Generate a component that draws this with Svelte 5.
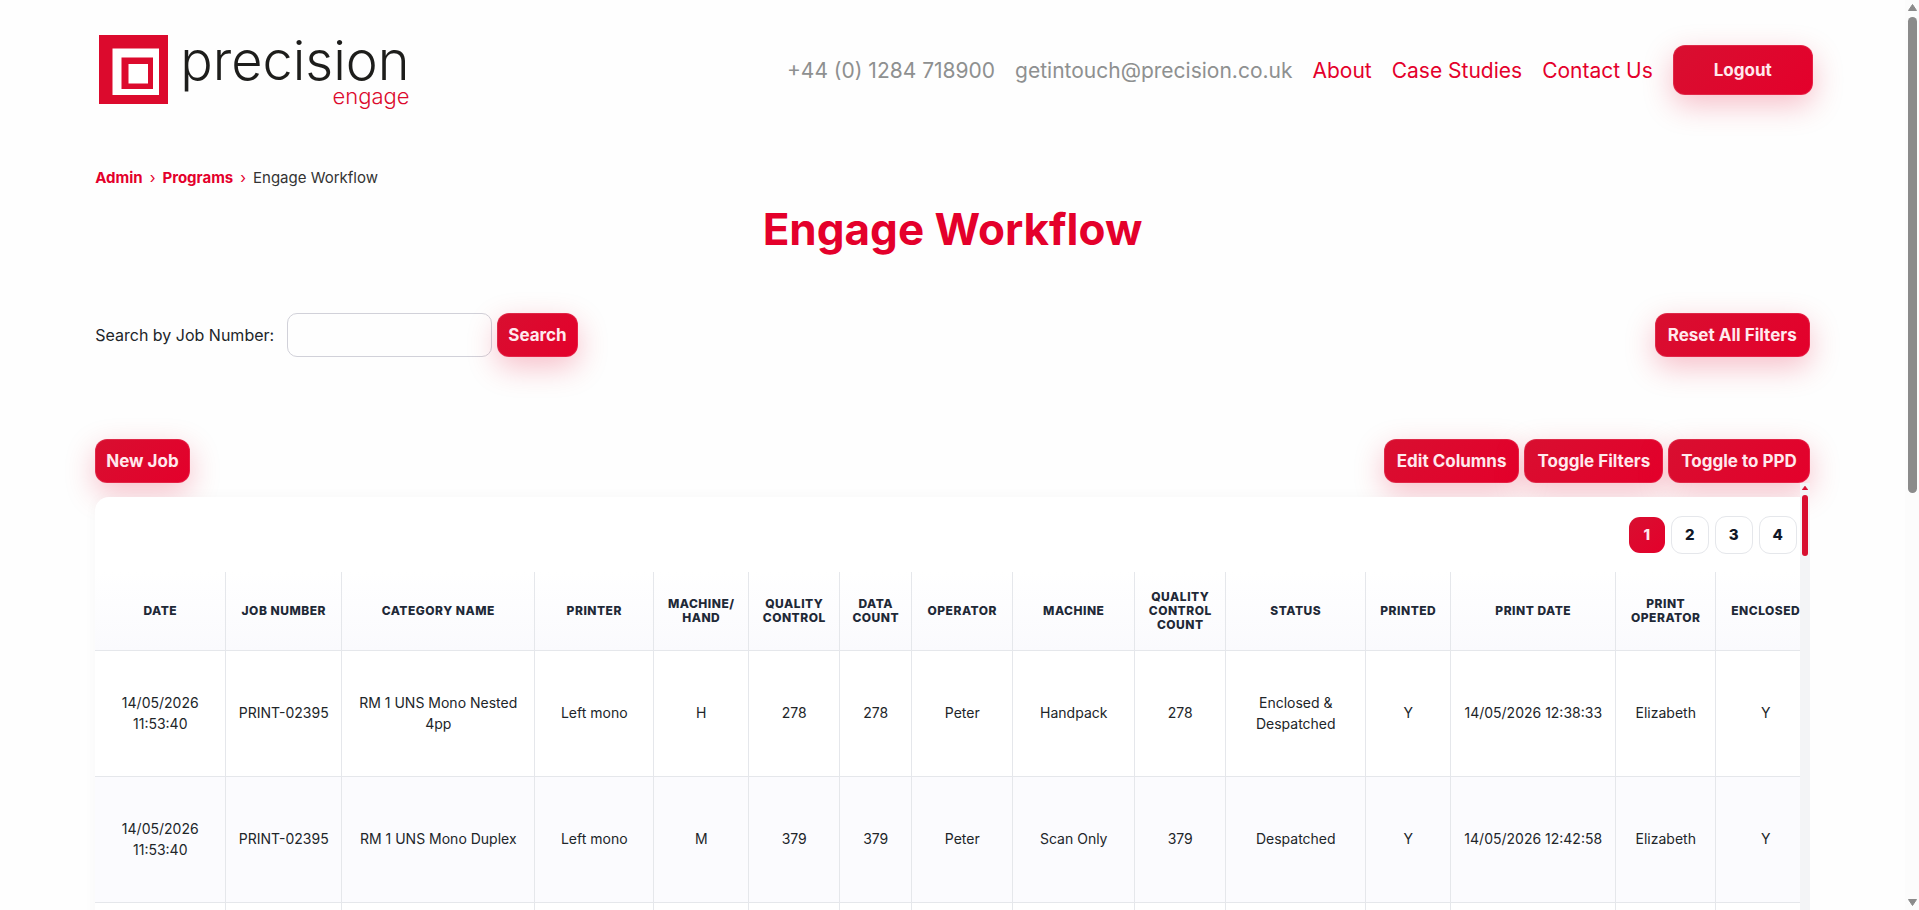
<script>
  const columns = [
    { label: 'Date', width: 131 },
    { label: 'Job Number', width: 116 },
    { label: 'Category Name', width: 193 },
    { label: 'Printer', width: 119 },
    { label: 'Machine/ Hand', width: 95 },
    { label: 'Quality Control', width: 91 },
    { label: 'Data Count', width: 72 },
    { label: 'Operator', width: 101 },
    { label: 'Machine', width: 122 },
    { label: 'Quality Control Count', width: 91 },
    { label: 'Status', width: 140 },
    { label: 'Printed', width: 85 },
    { label: 'Print Date', width: 165 },
    { label: 'Print Operator', width: 100 },
    { label: 'Enclosed', width: 100 }
  ];

  const rows = [
    ['14/05/2026 11:53:40', 'PRINT-02395', 'RM 1 UNS Mono Nested 4pp', 'Left mono', 'H', '278', '278', 'Peter', 'Handpack', '278', 'Enclosed & Despatched', 'Y', '14/05/2026 12:38:33', 'Elizabeth', 'Y'],
    ['14/05/2026 11:53:40', 'PRINT-02395', 'RM 1 UNS Mono Duplex', 'Left mono', 'M', '379', '379', 'Peter', 'Scan Only', '379', 'Despatched', 'Y', '14/05/2026 12:42:58', 'Elizabeth', 'Y'],
    columns.map(() => '')
  ];

  const pages = [1, 2, 3, 4];
  let current = $state(1);
  let jobNumber = $state('');
</script>

<div class="page">
  <div class="view">
    <header>
      <a class="logo" href="#home" aria-label="precision engage">
        <svg width="69" height="69" viewBox="0 0 69 69" aria-hidden="true">
          <rect width="69" height="69" fill="#dc0a2d" />
          <rect x="13.500" y="13.500" width="46.500" height="46.500" fill="#fff" />
          <rect x="22.500" y="22.500" width="31.500" height="31.500" fill="#dc0a2d" />
          <rect x="29.500" y="29" width="19.500" height="19.500" fill="#fff" />
        </svg>
        <span class="wordmark">
          <span class="brand">precision</span>
          <span class="sub">engage</span>
        </span>
      </a>
      <nav>
        <a class="muted" href="#phone">+44 (0) 1284 718900</a>
        <a class="muted" href="#email">getintouch@precision.co.uk</a>
        <a href="#about">About</a>
        <a href="#case-studies">Case Studies</a>
        <a href="#contact">Contact Us</a>
        <button class="btn logout">Logout</button>
      </nav>
    </header>

    <main>
      <div class="crumbs">
        <a href="#admin">Admin</a><i>›</i><a href="#programs">Programs</a><i>›</i><span>Engage Workflow</span>
      </div>
      <h1>Engage Workflow</h1>

      <div class="bar search">
        <label for="job">Search by Job Number:</label>
        <input id="job" type="text" bind:value={jobNumber} />
        <button class="btn snug">Search</button>
        <button class="btn end">Reset All Filters</button>
      </div>

      <div class="bar actions">
        <button class="btn snug">New Job</button>
        <button class="btn end">Edit Columns</button>
        <button class="btn">Toggle Filters</button>
        <button class="btn">Toggle to PPD</button>
      </div>

      <div class="panel">
        <div class="card">
          <div class="pager">
            {#each pages as n}
              <button class:active={n === current} onclick={() => (current = n)}>{n}</button>
            {/each}
          </div>
          <div class="clip">
            <table>
              <colgroup>
                {#each columns as c}<col style="width: {c.width}px" />{/each}
              </colgroup>
              <thead>
                <tr>{#each columns as c}<th>{c.label}</th>{/each}</tr>
              </thead>
              <tbody>
                {#each rows as row}
                  <tr>{#each row as cell}<td>{cell}</td>{/each}</tr>
                {/each}
              </tbody>
            </table>
          </div>
        </div>
        <div class="inner-scroll">
          <svg width="6" height="4" viewBox="0 0 6 4" aria-hidden="true"><path d="M3 0 6 4H0z" fill="#d80f30" stroke="#d80f30" stroke-width=".5" /></svg>
          <div class="inner-thumb"></div>
        </div>
      </div>
    </main>
  </div>

  <div class="scroll">
    <svg width="9" height="7" viewBox="0 0 9 7" aria-hidden="true"><path d="M4.500 .5 8.500 6.500H.5z" fill="#8b8b8b" stroke="#8b8b8b" stroke-linejoin="round" /></svg>
    <div class="thumb"></div>
    <svg width="9" height="7" viewBox="0 0 9 7" aria-hidden="true"><path d="M4.500 6.500 8.500 .5H.5z" fill="#8b8b8b" stroke="#8b8b8b" stroke-linejoin="round" /></svg>
  </div>
</div>

<style>
  :global(body) {
    margin: 0;
    background: #fefefe;
  }
  .page {
    display: flex;
    height: 100vh;
    overflow: hidden;
    font-family: Inter, 'Open Sans', sans-serif;
    color: #212529;
  }
  .page * {
    box-sizing: border-box;
  }
  .view {
    flex: 1;
    min-width: 0;
    overflow: hidden;
  }
  a {
    color: #e4002b;
    text-decoration: none;
  }
  button {
    font-family: inherit;
    cursor: pointer;
  }

  header {
    width: 90%;
    height: 140px;
    margin: 0 auto;
    padding-left: 4px;
    display: flex;
    align-items: center;
    justify-content: space-between;
  }
  .logo {
    display: flex;
    gap: 12px;
  }
  .wordmark {
    display: flex;
    flex-direction: column;
    align-items: flex-end;
    font-weight: 300;
  }
  .brand {
    font-size: 54px;
    line-height: 52px;
    color: #1d1d1b;
  }
  .sub {
    font-size: 22px;
    line-height: 18px;
    color: #dc0a2d;
  }
  nav {
    display: flex;
    align-items: center;
    gap: 20px;
    margin-right: -3px;
    font-size: 21px;
    white-space: nowrap;
  }
  .muted {
    color: #8e9090;
  }

  .btn {
    height: 44px;
    padding: 0 12px;
    border: 1px solid rgba(255, 255, 255, 0.12);
    border-radius: 12px;
    background: linear-gradient(135deg, #d80f30, #e4002b) border-box;
    box-shadow: 0 10px 30px rgba(228, 0, 43, 0.25);
    color: #ffe9ed;
    font-size: 17px;
    font-weight: 700;
    white-space: nowrap;
  }
  .btn.snug {
    padding: 0 10px;
  }
  .btn.logout {
    height: 50px;
    padding: 0 40px;
  }

  main {
    width: 90%;
    margin: 0 auto;
  }
  .crumbs {
    display: flex;
    gap: 7px;
    padding-top: 28px;
    font-size: 15px;
    line-height: 20px;
    color: #333;
  }
  .crumbs a {
    font-weight: 700;
  }
  .crumbs i {
    font-style: normal;
    color: #e4002b;
  }
  h1 {
    margin: 16px 0 0;
    font-size: 44px;
    line-height: 50px;
    font-weight: 700;
    text-align: center;
    color: #e4002b;
  }
  .bar {
    display: flex;
    align-items: center;
    gap: 5px;
  }
  .search {
    margin-top: 59px;
  }
  .search label {
    width: 187px;
    font-size: 16px;
    white-space: nowrap;
  }
  .search input {
    width: 205px;
    height: 44px;
    padding: 0 12px;
    border: 1px solid #d1d1d9;
    border-radius: 10px;
    background: transparent;
    font: inherit;
    font-size: 16px;
  }
  .actions {
    margin-top: 82px;
  }
  .end {
    margin-left: auto;
  }

  .panel {
    display: flex;
  }
  .card {
    flex: 1;
    min-width: 0;
    margin-top: 14px;
    border-radius: 14px 0 0 0;
    background: #fff;
    box-shadow: 0 0 14px rgba(0, 0, 0, 0.03);
  }
  .pager {
    display: flex;
    align-items: center;
    justify-content: flex-end;
    gap: 6px;
    height: 75px;
    padding: 0 3px 0 0;
  }
  .pager button {
    width: 38px;
    height: 38px;
    padding: 0;
    border: 1px solid #e5e7eb;
    border-radius: 11px;
    background: #fff;
    color: #111827;
    font-size: 15px;
    font-weight: 800;
  }
  .pager button.active {
    width: 36px;
    height: 36px;
    border: 0;
    background: linear-gradient(135deg, #d80f30, #e4002b);
    color: #ffe9ed;
  }
  .clip {
    overflow: hidden;
  }
  table {
    width: 1721px;
    table-layout: fixed;
    border-collapse: separate;
    border-spacing: 0;
    text-align: center;
  }
  th,
  td {
    border-right: 1px solid #e5e7eb;
    border-bottom: 1px solid #e5e7eb;
    vertical-align: middle;
  }
  th {
    height: 79px;
    padding: 0 8px;
    background: linear-gradient(#fff, #fafafd);
    color: #1f2937;
    font-size: 12px;
    line-height: 14px;
    font-weight: 800;
    letter-spacing: 0.5px;
    text-transform: uppercase;
  }
  td {
    height: 126px;
    padding: 0 10px 2px;
    font-size: 14px;
    line-height: 21px;
  }
  tbody tr:nth-child(even) td {
    background: #fbfbfe;
  }
  .inner-scroll {
    width: 10px;
    padding-top: 3px;
    display: flex;
    flex-direction: column;
    align-items: center;
    gap: 5px;
    background: #f3f4f6;
  }
  .inner-thumb {
    width: 6px;
    height: 61px;
    border-radius: 3px;
    background: #d80f30;
  }

  .scroll {
    width: 14px;
    padding: 4px 0 4px 1px;
    display: flex;
    flex-direction: column;
    align-items: center;
    background: #fcfcfc;
  }
  .thumb {
    width: 9px;
    height: 476px;
    margin: 6px 0 auto;
    border-radius: 5px;
    background: #8b8b8b;
  }
</style>
